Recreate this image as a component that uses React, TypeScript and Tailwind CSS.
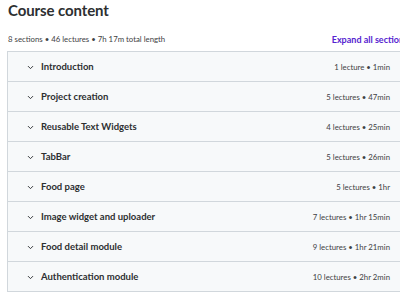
import { ChevronDown } from "lucide-react";

const SECTIONS = [
  { title: "Introduction", meta: "1 lecture • 1min" },
  { title: "Project creation", meta: "5 lectures • 47min" },
  { title: "Reusable Text Widgets", meta: "4 lectures • 25min" },
  { title: "TabBar", meta: "5 lectures • 26min" },
  { title: "Food page", meta: "5 lectures • 1hr" },
  { title: "Image widget and uploader", meta: "7 lectures • 1hr 15min" },
  { title: "Food detail module", meta: "9 lectures • 1hr 21min" },
  { title: "Authentication module", meta: "10 lectures • 2hr 2min" },
];

export default function App() {
  return (
    <div className="w-[400px] h-[292px] overflow-hidden bg-white text-[#2d2f31] font-['Lato','Noto_Sans',sans-serif]">
      <div className="w-[412px] pl-[7px]">
        <h2 className="text-[15px] leading-[20px] font-bold pl-[1px] tracking-[-0.1px]">Course content</h2>
        <div className="flex items-center justify-between mt-[13px] h-[13px] pr-[4px]">
          <span className="text-[7.8px] text-[#3e4143] pl-[1px]">8 sections • 46 lectures • 7h 17m total length</span>
          <span className="text-[9px] font-bold text-[#5624d0] whitespace-nowrap">Expand all sections</span>
        </div>
        <ul className="mt-[5px] border border-[#d1d7dc] border-b-0">
          {SECTIONS.map((s) => (
            <li
              key={s.title}
              className="h-[30px] flex items-center bg-[#f7f9fa] border-b border-[#d1d7dc] pl-[18px] pr-[21px] pt-[2px]"
            >
              <ChevronDown size={9} strokeWidth={2.5} className="text-[#2d2f31] mr-[6px]" />
              <span className="text-[9.5px] font-bold">{s.title}</span>
              <span className="ml-auto text-[7.8px] text-[#3e4143]">{s.meta}</span>
            </li>
          ))}
        </ul>
      </div>
    </div>
  );
}
